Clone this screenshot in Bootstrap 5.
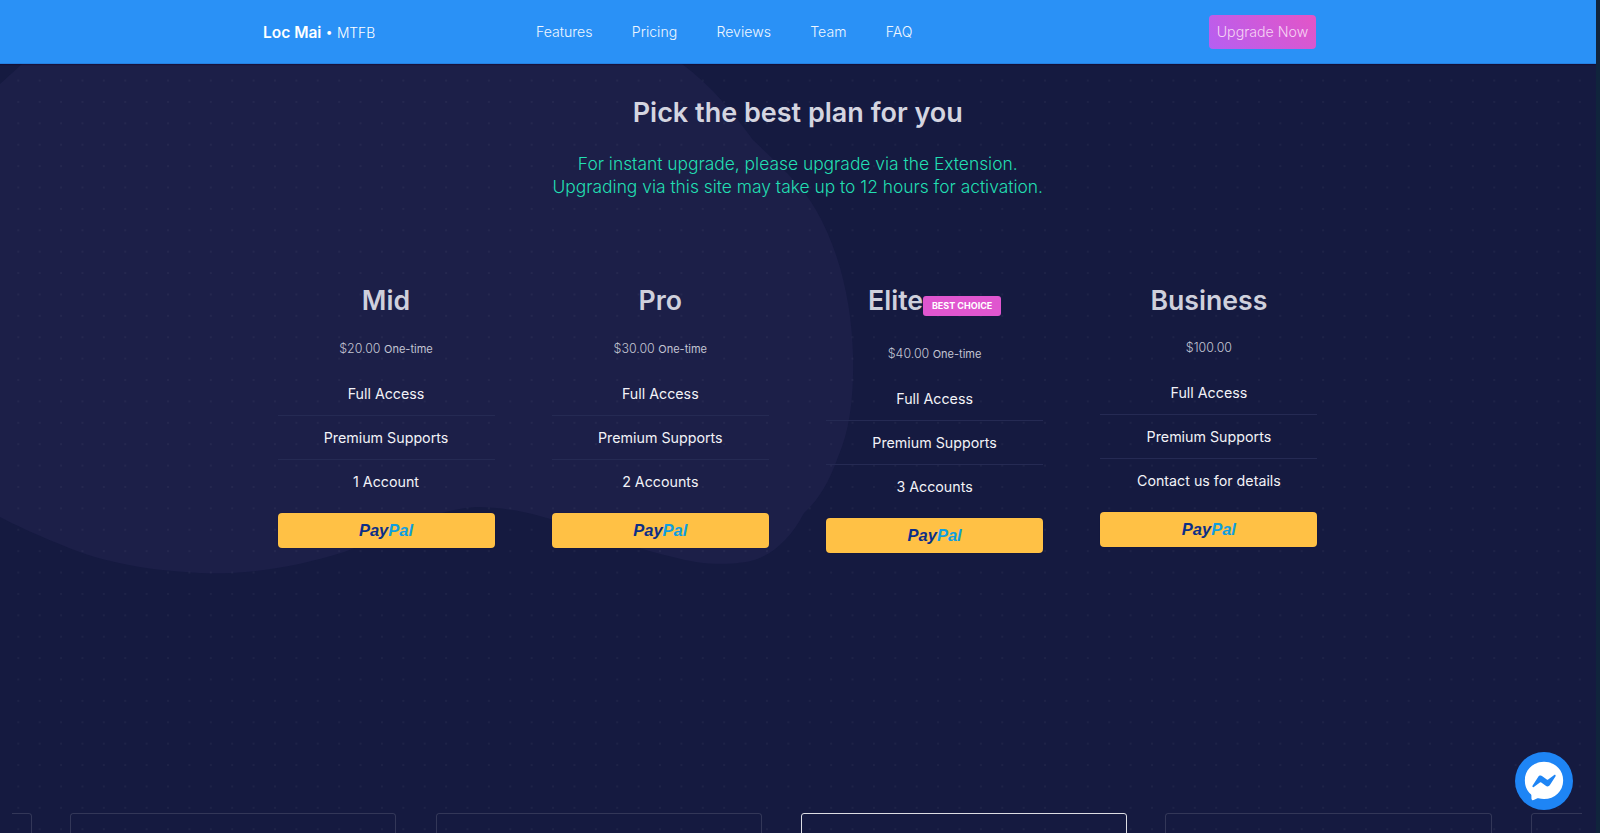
<!DOCTYPE html>
<html lang="en">
<head>
    <title>Pricing</title>
    <meta charset="utf-8">
    <meta name="viewport" content="width=device-width, initial-scale=1">
    <link href="https://cdn.jsdelivr.net/npm/bootstrap@5.3.0/dist/css/bootstrap.min.css" rel="stylesheet">
    <script src="https://cdn.jsdelivr.net/npm/bootstrap@5.3.0/dist/js/bootstrap.bundle.min.js"></script>
    <style>
        html, body { height: 833px; overflow: hidden; }
        body { background: #10243c; font-family: Inter, "Liberation Sans", sans-serif; }
        .page-shell { width: 1595.5px; height: 833px; position: relative; overflow: hidden; background: #151a40; }
        .page-blob { position: absolute; left: 0; top: 0; z-index: 0; }
        .page-dots { position: absolute; inset: 0; z-index: 0;
            background-image: radial-gradient(circle, rgba(255,255,255,.04) 1px, transparent 1.5px);
            background-size: 21.4px 21.4px; background-position: 7.6px 5.7px; }
        .top-bar { height: 64px; padding: 0 0 0 263px; background: #2a91f6; border-bottom: 1px solid #2480e0; box-shadow: 0 1px 1px rgba(20,0,40,.4); position: relative; z-index: 2; flex-wrap: nowrap; justify-content: flex-start; }
        .top-brand { width: 273px; margin: 0; padding: 2px 0 0; font-size: 13.8px; color: #fff; }
        .top-brand b { font-size: 15.5px; font-weight: 600; }
        .top-brand span { font-weight: 300; }
        .top-links { gap: 39.3px; flex-direction: row; }
        .top-links .nav-link { padding: 0; color: #eef6ff; font-size: 14.1px; font-weight: 300; }
        .upgrade-btn { margin-left: auto; margin-right: 279.5px; width: 107px; height: 34px; padding: 0; border: 0; border-radius: 4px; font-size: 14.2px; font-weight: 300; color: #f6d4f4; background: linear-gradient(45deg, #b55ff2, #e455c6); }
        .plans-wrap { position: relative; z-index: 1; width: 1040px; margin-left: 277.5px; }
        .plans-head { padding-top: 33px; margin-left: -277.5px; width: 1595.5px; }
        .plans-head h1 { font-size: 27px; line-height: 32px; font-weight: 600; color: #d4d5e0; margin: 0 0 23px; }
        .plans-head p { font-size: 17.4px; line-height: 23px; font-weight: 300; color: #22dfb2; margin: 0 0 1px; }
        .plans-grid { display: grid; grid-template-columns: repeat(4, 217px); column-gap: 57.3px; align-items: start; margin-top: 81px; }
        .plan-box { background: transparent; border: 0; border-radius: 0; text-align: center; }
        .plan-title { font-size: 26.7px; line-height: 42px; font-weight: 600; color: #cfd0dc; margin: 0; }
        .plan-title.has-tag { margin-bottom: 5px; }
        .plan-tag { display: inline-block; vertical-align: 1px; width: 78px; height: 20px; line-height: 20px; border-radius: 3px; background: #e056cf; color: #fff; font-size: 9px; font-weight: 700; text-transform: uppercase; }
        .plan-price { font-size: 12.4px; font-weight: 300; line-height: 19px; color: #c3c5d3; margin: 18px 0 13px; }
        .plan-price.no-term { margin: 17px 0 14px; }
        .plan-price small { font-size: 11px; font-weight: 400; }
        .plan-list { background: transparent; --bs-list-group-bg: transparent; --bs-list-group-border-color: #252a53; }
        .plan-list .list-group-item { padding: 11px 0; line-height: 21px; font-size: 14.25px; color: #f2f2f7; }
        .paypal-btn { display: block; width: 100%; height: 35px; padding: 0; margin-top: 10px; border: 0; border-radius: 4px; background: #ffc145; box-shadow: 0 0 1px #0b0e33; }
        .paypal-btn:hover { background: #ffc145; }
        .paypal-word { font-family: "Liberation Sans", sans-serif; font-size: 16.5px; font-weight: 700; font-style: italic; color: #0c2f87; }
        .paypal-word span { color: #0f9fe0; }
        .feature-strip { position: absolute; left: 12px; top: 813px; z-index: 1; width: 1570px; height: 20px; overflow: hidden; }
        .strip-item { position: absolute; top: 0; height: 40px; border: 1px solid rgba(255,255,255,.13); border-radius: 3px; }
        .strip-item.is-active { border-color: #dcdde3; }
        .chat-bubble { position: absolute; left: 1515px; top: 752px; z-index: 3; width: 58px; height: 58px; background: #1e85f5; }
    </style>
</head>
<body>
<div class="page-shell">
    <svg class="page-blob" width="1596" height="833" viewBox="0 0 1596 833" aria-hidden="true">
        <path fill="#1c1f48" d="M0 84 L22 64 L682 64 C712 86 735 115 753 140 C785 170 805 190 816 210 C842 255 852 310 853 355 C854 395 850 430 838 457 C828 485 818 500 804 513 C790 540 770 558 746 562 C720 566 695 563 677 558 C640 550 610 538 574 527 C540 515 510 507 476 507 C430 510 390 535 344 552 C300 566 250 575 200 573 C140 570 95 560 57 543 C35 534 15 525 0 517 Z"/>
    </svg>
    <div class="page-dots"></div>

    <nav class="navbar top-bar">
        <a class="navbar-brand top-brand" href="#"><b>Loc Mai</b> <span>• MTFB</span></a>
        <ul class="navbar-nav top-links">
            <li class="nav-item"><a class="nav-link" href="#">Features</a></li>
            <li class="nav-item"><a class="nav-link" href="#">Pricing</a></li>
            <li class="nav-item"><a class="nav-link" href="#">Reviews</a></li>
            <li class="nav-item"><a class="nav-link" href="#">Team</a></li>
            <li class="nav-item"><a class="nav-link" href="#">FAQ</a></li>
        </ul>
        <button class="btn upgrade-btn">Upgrade Now</button>
    </nav>

    <div class="plans-wrap">
        <div class="plans-head text-center">
            <h1>Pick the best plan for you</h1>
            <p>For instant upgrade, please upgrade via the Extension.<br>Upgrading via this site may take up to 12 hours for activation.</p>
        </div>

        <div class="plans-grid">
            <div class="card plan-box">
                <h2 class="plan-title">Mid</h2>
                <div class="plan-price">$20.00 <small>One-time</small></div>
                <ul class="list-group list-group-flush plan-list">
                    <li class="list-group-item">Full Access</li>
                    <li class="list-group-item">Premium Supports</li>
                    <li class="list-group-item">1 Account</li>
                </ul>
                <button class="btn paypal-btn"><span class="paypal-word">Pay<span>Pal</span></span></button>
            </div>
            <div class="card plan-box">
                <h2 class="plan-title">Pro</h2>
                <div class="plan-price">$30.00 <small>One-time</small></div>
                <ul class="list-group list-group-flush plan-list">
                    <li class="list-group-item">Full Access</li>
                    <li class="list-group-item">Premium Supports</li>
                    <li class="list-group-item">2 Accounts</li>
                </ul>
                <button class="btn paypal-btn"><span class="paypal-word">Pay<span>Pal</span></span></button>
            </div>
            <div class="card plan-box">
                <h2 class="plan-title has-tag">Elite<span class="plan-tag">Best Choice</span></h2>
                <div class="plan-price">$40.00 <small>One-time</small></div>
                <ul class="list-group list-group-flush plan-list">
                    <li class="list-group-item">Full Access</li>
                    <li class="list-group-item">Premium Supports</li>
                    <li class="list-group-item">3 Accounts</li>
                </ul>
                <button class="btn paypal-btn"><span class="paypal-word">Pay<span>Pal</span></span></button>
            </div>
            <div class="card plan-box">
                <h2 class="plan-title">Business</h2>
                <div class="plan-price no-term">$100.00</div>
                <ul class="list-group list-group-flush plan-list">
                    <li class="list-group-item">Full Access</li>
                    <li class="list-group-item">Premium Supports</li>
                    <li class="list-group-item">Contact us for details</li>
                </ul>
                <button class="btn paypal-btn"><span class="paypal-word">Pay<span>Pal</span></span></button>
            </div>
        </div>
    </div>

    <div class="feature-strip">
        <div class="strip-item" style="left: -307px; width: 327px"></div>
        <div class="strip-item" style="left: 58px; width: 326px"></div>
        <div class="strip-item" style="left: 424px; width: 326px"></div>
        <div class="strip-item is-active" style="left: 789px; width: 326px"></div>
        <div class="strip-item" style="left: 1153px; width: 327px"></div>
        <div class="strip-item" style="left: 1519px; width: 327px"></div>
    </div>

    <div class="chat-bubble rounded-circle d-flex align-items-center justify-content-center">
        <svg width="46" height="46" viewBox="0 0 24 24" aria-hidden="true">
            <path fill="#fff" d="M12 2C6.36 2 2 6.13 2 11.7c0 2.91 1.19 5.44 3.14 7.17.16.13.26.35.27.57l.05 1.78c.04.57.61.94 1.13.71l1.98-.87c.17-.06.36-.09.53-.06.9.27 1.9.4 2.9.4 5.64 0 10-4.13 10-9.7C22 6.13 17.64 2 12 2z"/>
            <path fill="#1e85f5" d="M6 14.54l2.94-4.67c.46-.74 1.47-.93 2.17-.4l2.34 1.76c.21.16.51.16.72 0l3.16-2.4c.42-.32.97.18.7.63l-2.94 4.66c-.46.74-1.47.93-2.17.4l-2.34-1.76a.6.6 0 00-.72 0l-3.16 2.4c-.42.32-.97-.18-.7-.62z"/>
        </svg>
    </div>
</div>
</body>
</html>
